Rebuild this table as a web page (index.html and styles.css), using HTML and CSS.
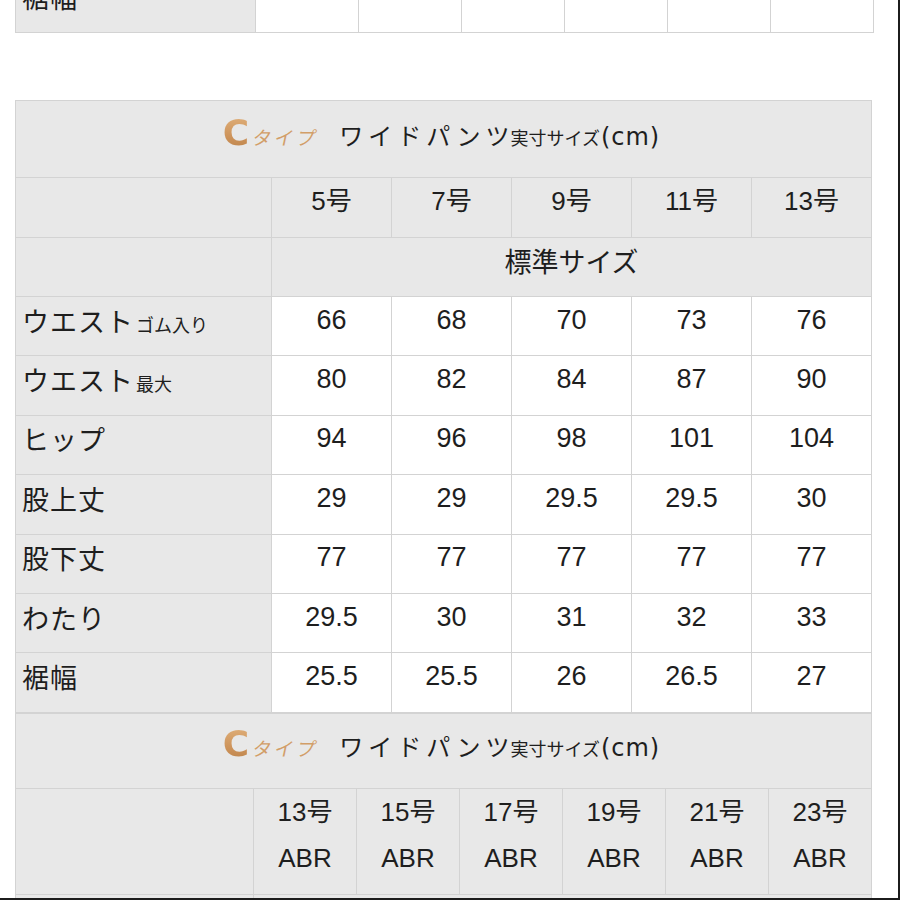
FILE: index.html
```html
<!DOCTYPE html>
<html lang="ja">
<head>
<meta charset="utf-8">
<title>Cタイプ ワイドパンツ 実寸サイズ</title>
<link rel="stylesheet" href="styles.css">
</head>
<body>
<div class="frame">
  <table class="sheet sheet-top">
    <colgroup><col class="col-lab-top"><col class="col-n6"><col class="col-n6"><col class="col-n6"><col class="col-n6"><col class="col-n6"><col class="col-n6"></colgroup>
    <tr class="row-top"><th class="lab">裾幅</th><td></td><td></td><td></td><td></td><td></td><td></td></tr>
  </table>

  <table class="sheet sheet-main">
    <colgroup><col class="col-lab"><col class="col-n5"><col class="col-n5"><col class="col-n5"><col class="col-n5"><col class="col-n5"></colgroup>
    <tr class="row-title"><th colspan="6" class="title"><span class="t-c">C</span><span class="t-type">タイプ</span><span class="t-name">ワイドパンツ</span><span class="t-sub">実寸サイズ</span><span class="t-cm">(cm)</span></th></tr>
    <tr class="row-head"><th class="lab"></th><th class="hd">5号</th><th class="hd">7号</th><th class="hd">9号</th><th class="hd">11号</th><th class="hd">13号</th></tr>
    <tr class="row-std"><th class="lab"></th><th class="hd std" colspan="5">標準サイズ</th></tr>
    <tr class="row-data"><th class="lab">ウエスト<small>ゴム入り</small></th><td>66</td><td>68</td><td>70</td><td>73</td><td>76</td></tr>
    <tr class="row-data"><th class="lab">ウエスト<small>最大</small></th><td>80</td><td>82</td><td>84</td><td>87</td><td>90</td></tr>
    <tr class="row-data"><th class="lab">ヒップ</th><td>94</td><td>96</td><td>98</td><td>101</td><td>104</td></tr>
    <tr class="row-data"><th class="lab">股上丈</th><td>29</td><td>29</td><td>29.5</td><td>29.5</td><td>30</td></tr>
    <tr class="row-data"><th class="lab">股下丈</th><td>77</td><td>77</td><td>77</td><td>77</td><td>77</td></tr>
    <tr class="row-data"><th class="lab">わたり</th><td>29.5</td><td>30</td><td>31</td><td>32</td><td>33</td></tr>
    <tr class="row-data"><th class="lab">裾幅</th><td>25.5</td><td>25.5</td><td>26</td><td>26.5</td><td>27</td></tr>
  </table>

  <table class="sheet sheet-big">
    <colgroup><col class="col-lab-big"><col class="col-n6"><col class="col-n6"><col class="col-n6"><col class="col-n6"><col class="col-n6"><col class="col-n6"></colgroup>
    <tr class="row-title2"><th colspan="7" class="title title2"><span class="t-c">C</span><span class="t-type">タイプ</span><span class="t-name">ワイドパンツ</span><span class="t-sub">実寸サイズ</span><span class="t-cm">(cm)</span></th></tr>
    <tr class="row-head2"><th class="lab"></th><th class="hd two">13号<br>ABR</th><th class="hd two">15号<br>ABR</th><th class="hd two">17号<br>ABR</th><th class="hd two">19号<br>ABR</th><th class="hd two">21号<br>ABR</th><th class="hd two">23号<br>ABR</th></tr>
    <tr class="row-data"><th class="lab"></th><th class="hd" colspan="6"></th></tr>
  </table>
</div>
</body>
</html>
```

FILE: styles.css
```css
html, body {
  margin: 0;
  padding: 0;
  background: #ffffff;
}

.frame {
  width: 898px;
  height: 898px;
  overflow: hidden;
  border-right: 2px solid #1c1c1c;
  border-bottom: 2px solid #1c1c1c;
  font-family: "Liberation Sans", "Noto Sans CJK JP", sans-serif;
  color: #1e1e1e;
}

.sheet {
  border-collapse: collapse;
  table-layout: fixed;
  margin-left: 15px;
}

.sheet th,
.sheet td {
  border: 1px solid #d3d3d3;
  padding: 0 0 12px 0;
  font-weight: 400;
  text-align: center;
  vertical-align: middle;
  font-size: 27px;
}

.sheet td {
  background: #ffffff;
}

.sheet th {
  background: #e8e8e8;
}

.sheet .lab {
  text-align: left;
  padding-left: 6px;
  font-size: 27px;
  letter-spacing: 1px;
  white-space: nowrap;
}

.sheet .row-top .lab {
  padding-bottom: 0;
}

.sheet .lab small {
  font-size: 18px;
  letter-spacing: 0;
  margin-left: 2px;
}

.sheet .hd {
  font-size: 26px;
  padding-bottom: 18px;
}

.sheet .hd.std {
  font-size: 27px;
  padding-bottom: 14px;
}

.sheet .hd.two {
  line-height: 46px;
  padding-bottom: 12px;
}

/* column widths */
.sheet-top { width: 858px; margin-top: -40px; }
.col-lab-top { width: 240px; }
.col-n6 { width: 103px; }

.sheet-main { width: 856px; margin-top: 67px; }
.col-lab { width: 256px; }
.col-n5 { width: 120px; }

.sheet-big { width: 856px; }
.col-lab-big { width: 238px; }

/* row heights */
.row-top { height: 72px; }
.row-title { height: 77px; }
.row-title2 { height: 75px; }
.row-head { height: 60px; }
.row-std { height: 59px; }
.row-data { height: 59.4px; }
.row-head2 { height: 106px; }

/* title */
.sheet .title {
  text-align: center;
  white-space: nowrap;
  padding-bottom: 14px;
  padding-right: 4px;
}

.sheet .title2 {
  padding-bottom: 14px;
}

.t-c {
  font-family: "DejaVu Sans", sans-serif;
  font-weight: 700;
  font-size: 36px;
  background: linear-gradient(180deg, #e2b47f 0%, #cd935a 60%, #ba8149 100%);
  -webkit-background-clip: text;
  background-clip: text;
  color: transparent;
}

.t-type {
  font-family: "Noto Sans CJK JP", sans-serif;
  font-size: 19px;
  letter-spacing: 3px;
  color: #d29e68;
  margin-left: 4px;
  display: inline-block;
  transform: skewX(-12deg);
}

.t-name {
  font-family: "Noto Sans CJK JP", sans-serif;
  font-size: 24px;
  letter-spacing: 5px;
  margin-left: 20px;
}

.t-sub {
  font-family: "Noto Sans CJK JP", sans-serif;
  font-size: 18px;
  margin-left: -4px;
}

.t-cm {
  font-family: "DejaVu Sans", sans-serif;
  font-size: 24px;
  letter-spacing: 1px;
  margin-left: 1px;
}
```
